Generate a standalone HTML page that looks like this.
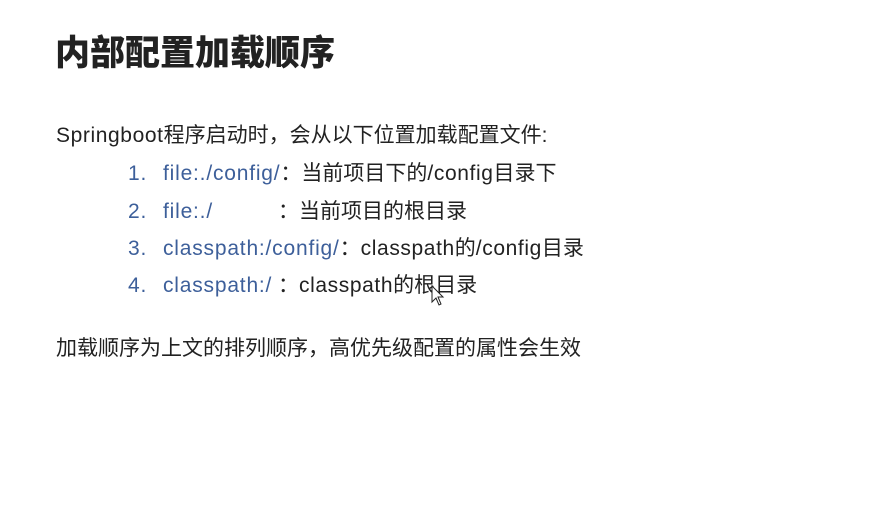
<!DOCTYPE html>
<html><head><meta charset="utf-8"><style>
body{margin:0;width:885px;height:524px;background:#fff;overflow:hidden;position:relative;font-family:"Liberation Sans","Noto Sans CJK SC",sans-serif;color:#222;}
.a{position:absolute;white-space:nowrap;font-size:21px;line-height:26px;}
.b{color:#3d5f9a;letter-spacing:0.8px;}
.l{letter-spacing:0.6px;}
h1{position:absolute;left:55px;top:29px;margin:0;font-size:35px;line-height:44px;font-weight:900;color:#222;font-family:"Noto Sans CJK SC",sans-serif;}
</style></head><body>
<h1>内部配置加载顺序</h1>
<div class="a" style="left:56px;top:123px"><span class="l">Springboot</span>程序启动时，会从以下位置加载配置文件:</div>
<div class="a b" style="left:128px;top:161px">1.</div>
<div class="a" style="left:163px;top:161px"><span class="b">file:./config/</span>：当前项目下的<span class="l">/config</span>目录下</div>
<div class="a b" style="left:128px;top:199px">2.</div>
<div class="a b" style="left:163px;top:199px">file:./</div>
<div class="a" style="left:278px;top:199px">：当前项目的根目录</div>
<div class="a b" style="left:128px;top:236px">3.</div>
<div class="a" style="left:163px;top:236px"><span class="b">classpath:/config/</span>：<span class="l">classpath</span>的<span class="l">/config</span>目录</div>
<div class="a b" style="left:128px;top:273px">4.</div>
<div class="a" style="left:163px;top:273px"><span class="b">classpath:/</span> ：<span class="l">classpath</span>的根目录</div>
<div class="a" style="left:56px;top:336px">加载顺序为上文的排列顺序，高优先级配置的属性会生效</div>
<svg style="position:absolute;left:431px;top:285px" width="14" height="22"><path d="M1 1 L1 17 L5 13 L8 20 L10 19 L7 12 L12 12 Z" fill="#fff" stroke="#222" stroke-width="1"/></svg>
</body></html>
